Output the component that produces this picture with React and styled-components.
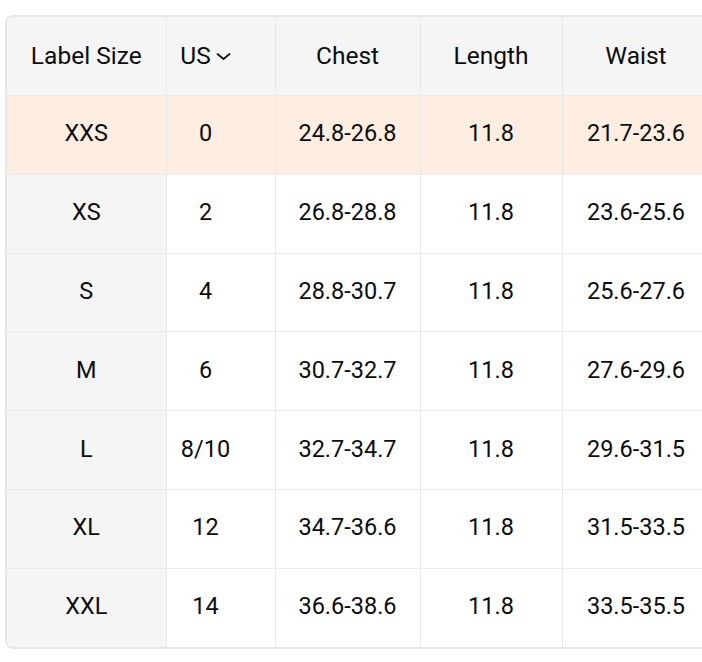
import React from "react";
import styled, { createGlobalStyle } from "styled-components";

const GlobalStyle = createGlobalStyle`
  html, body {
    margin: 0;
    padding: 0;
    background: #fff;
    overflow: hidden;
  }
  body {
    font-family: Roboto, "Noto Sans", Arial, sans-serif;
    color: #0d0d0d;
  }
`;

const columns = [
  { key: "label", title: "Label Size", width: 159 },
  { key: "us", title: "US", width: 109, select: true },
  { key: "chest", title: "Chest", width: 145 },
  { key: "length", title: "Length", width: 142 },
  { key: "waist", title: "Waist", width: 148 },
  { key: "hip", title: "Hip", width: 142 },
];

const rows = [
  { label: "XXS", us: "0", chest: "24.8-26.8", length: "11.8", waist: "21.7-23.6", hip: "30.7-32.7" },
  { label: "XS", us: "2", chest: "26.8-28.8", length: "11.8", waist: "23.6-25.6", hip: "32.7-34.7" },
  { label: "S", us: "4", chest: "28.8-30.7", length: "11.8", waist: "25.6-27.6", hip: "34.7-36.6" },
  { label: "M", us: "6", chest: "30.7-32.7", length: "11.8", waist: "27.6-29.6", hip: "36.6-38.6" },
  { label: "L", us: "8/10", chest: "32.7-34.7", length: "11.8", waist: "29.6-31.5", hip: "38.6-40.6" },
  { label: "XL", us: "12", chest: "34.7-36.6", length: "11.8", waist: "31.5-33.5", hip: "40.6-42.5" },
  { label: "XXL", us: "14", chest: "36.6-38.6", length: "11.8", waist: "33.5-35.5", hip: "42.5-44.5" },
];

const Page = styled.div`
  padding: 15px 0 0 5px;
`;

const Frame = styled.div`
  width: max-content;
  border: 2px solid #e6e6e6;
  border-radius: 8px;
  overflow: hidden;
`;

const Table = styled.table`
  border-collapse: collapse;
  table-layout: fixed;
  font-size: 23.5px;
  line-height: 26px;
`;

const Cell = styled.td`
  height: 74.8px;
  padding: 0 ${(p) => (p.$narrow ? "30px" : "0")} 3px 0;
  text-align: center;
  vertical-align: middle;
  white-space: nowrap;
  border-left: 1px solid #e8e8e8;
  border-top: 1px solid #ececec;
  background: ${(p) => (p.$active ? "#fdeee1" : p.$side ? "#f5f5f5" : "#fff")};
  &:first-child {
    border-left: none;
  }
`;

const HeadCell = styled(Cell).attrs({ as: "th" })`
  font-weight: 400;
  font-size: 24.5px;
  height: 77px;
  padding-bottom: 1px;
  background: #f5f5f5;
  border-top: none;
`;

const Select = styled.span`
  display: inline-flex;
  align-items: center;
  gap: 5px;
`;

const Chevron = () => (
  <svg width="15" height="10" viewBox="0 0 15 10" fill="none">
    <path d="M1.5 3l6 5 6-5" stroke="#111" strokeWidth="1.7" strokeLinecap="round" strokeLinejoin="round" />
  </svg>
);

export default function App() {
  return (
    <>
      <GlobalStyle />
      <Page>
        <Frame>
          <Table>
            <colgroup>
              {columns.map((c) => (
                <col key={c.key} style={{ width: c.width }} />
              ))}
            </colgroup>
            <thead>
              <tr>
                {columns.map((c) => (
                  <HeadCell key={c.key} $narrow={c.key === "us"}>
                    {c.select ? (
                      <Select>
                        {c.title}
                        <Chevron />
                      </Select>
                    ) : (
                      c.title
                    )}
                  </HeadCell>
                ))}
              </tr>
            </thead>
            <tbody>
              {rows.map((r, i) => (
                <tr key={r.label}>
                  {columns.map((c) => (
                    <Cell
                      key={c.key}
                      $active={i === 0}
                      $side={c.key === "label"}
                      $narrow={c.key === "us"}
                    >
                      {r[c.key]}
                    </Cell>
                  ))}
                </tr>
              ))}
            </tbody>
          </Table>
        </Frame>
      </Page>
    </>
  );
}
